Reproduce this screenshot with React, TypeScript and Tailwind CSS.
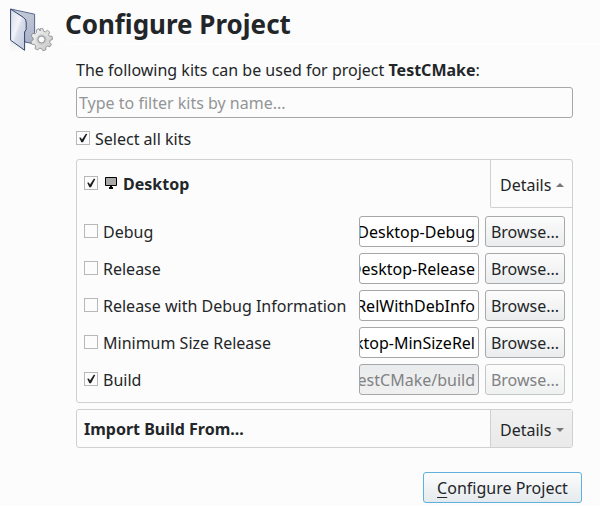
import React from "react";

function Check({ checked = false, className = "mb-px" }: { checked?: boolean; className?: string }) {
  return (
    <span className={`block h-[14px] w-[14px] shrink-0 border border-[#b8b8b8] bg-[#fcfcfc] ${className}`}>
      {checked && (
        <svg viewBox="0 0 12 12" className="block h-3 w-3">
          <path d="M2.2 5.7 3.8 5.4 5 7.5 8.8 1.7 10.3 2.1 6 10.2 4.4 10.2Z" fill="#1b1e20" />
        </svg>
      )}
    </span>
  );
}

function Heading() {
  return (
    <header className="flex h-[45px]">
      <svg viewBox="0 0 50 50" className="ml-[5px] mt-1 h-[50px] w-[50px] shrink-0">
        <defs>
          <linearGradient id="back" x1="0" y1="0" x2="0" y2="1">
            <stop offset="0" stopColor="#c3cad8" />
            <stop offset="1" stopColor="#a9b2c8" />
          </linearGradient>
          <linearGradient id="front" x1="0" y1="0" x2="1" y2="1">
            <stop offset="0" stopColor="#d7dce9" />
            <stop offset=".42" stopColor="#f1f3f8" />
            <stop offset=".52" stopColor="#d9deea" />
            <stop offset="1" stopColor="#bcc5da" />
          </linearGradient>
          <linearGradient id="metal" x1="0" y1="0" x2="1" y2="1">
            <stop offset="0" stopColor="#f8f8f8" />
            <stop offset="1" stopColor="#c4c4c4" />
          </linearGradient>
          <linearGradient id="reflection" x1="0" y1="0" x2="0" y2="1">
            <stop offset="0" stopColor="#d9dde5" />
            <stop offset="1" stopColor="#fcfcfc" />
          </linearGradient>
        </defs>
        <path d="M5 36 19 46 19 48 5 48Z" fill="url(#reflection)" opacity=".6" />
        <path d="M5.7 5 29.6 10.2 29.6 40 20 38Z" fill="url(#back)" stroke="#4a5a80" strokeWidth=".9" />
        <path d="M5.6 5.1 18.5 13.5Q21.6 15.5 21.2 19V25.5L19.6 28V46.3L5.6 36.2Z" fill="url(#front)" stroke="#33456e" strokeWidth="1" />
        <g transform="translate(36.5 35.5)" fill="url(#metal)" stroke="#858585" strokeWidth=".8">
          <path fillRule="evenodd" d="M-1.5-10.8H1.5L2-8.3 3.8-7.6 6-9.2 8.3-7.3 7-4.9 7.9-3.4 10.6-3.1 11-.1 8.5.9 8.2 2.8 9.9 4.8 8.4 7.3 5.8 6.6 4.3 7.8 4.3 10.3 1.4 11.2 0 9-2 8.7-3.8 10.5-6.5 9.1-5.9 6.4-7.1 5-9.8 4.7-10.6 1.8-8.4.4-8.3-1.5-10.2-3.4-9-6.1-6.3-5.7-5-7.1-5.2-9.6-2.5-10.8-1.3-8.5ZM0-3.5A3.5 3.5 0 1 0 0 3.5 3.5 3.5 0 1 0 0-3.5Z" />
          <circle r="4.6" fill="none" stroke="#bdbdbd" strokeWidth="1" />
          <circle r="3.3" fill="#fcfcfc" stroke="#8b929a" />
        </g>
      </svg>
      <h1 className="ml-[10px] h-[44px] flex-1 border-b border-white pt-[6px] text-[26px] font-bold leading-9">Configure Project</h1>
    </header>
  );
}

const rows = [
  { name: "Debug", path: "Desktop-Debug" },
  { name: "Release", path: "Desktop-Release" },
  { name: "Release with Debug Information", path: "Desktop-RelWithDebInfo" },
  { name: "Minimum Size Release", path: "Desktop-MinSizeRel" },
  { name: "Build", path: "TestCMake/build", checked: true },
];

function BuildRow({ name, path, checked }: { name: string; path: string; checked?: boolean }) {
  return (
    <div className="flex h-[31px] items-center">
      <Check checked={checked} />
      <span className="ml-[5px] flex-1 whitespace-nowrap pt-px">{name}</span>
      <div
        className={`flex h-[31px] w-[120px] items-center justify-end overflow-hidden whitespace-nowrap rounded-[3px] border border-[#a6a7a8] pr-[3px] pt-px ${
          checked ? "bg-linear-to-b from-[#eaebec] to-[#f0f0f1] text-[#808284]" : "bg-white text-black"
        }`}
      >
        {path}
      </div>
      <button
        className={`ml-[6px] h-[31px] w-[80px] rounded-[3px] border bg-linear-to-b pt-px ${
          checked ? "border-[#c5c6c6] from-[#fcfcfc] to-[#eff0f0] text-[#808284]" : "border-[#a8a9aa] from-[#fcfcfc] to-[#ebeced]"
        }`}
      >
        Browse...
      </button>
    </div>
  );
}

export default function App() {
  return (
    <main className="h-[506px] w-[600px] overflow-hidden bg-[#fcfcfc] font-['Noto_Sans',sans-serif] text-[16px] leading-[22px] text-[#232629]">
      <Heading />
      <div className="ml-[76px] w-[497px]">
        <p className="h-[42px] whitespace-nowrap pt-[14px]">
          The following kits can be used for project <b>TestCMake</b>:
        </p>
        <div className="flex h-[31px] items-center rounded-[3px] border border-[#a6a7a8] pl-[2px] pt-px text-[#939597]">
          Type to filter kits by name...
        </div>
        <div className="mt-[10px] flex h-[22px] items-center">
          <Check checked className="mb-[2px]" />
          <span className="ml-[5px]">Select all kits</span>
        </div>
        <section className="mt-[9px] h-[244px] rounded-[3px] border border-[#cfd0d1]">
          <div className="flex h-[48px]">
            <div className="flex flex-1 items-center pl-[7px]">
              <Check checked className="mb-[2px]" />
              <svg viewBox="0 0 12 12" className="mb-[2px] ml-[7px] h-[12px] w-[12px]">
                <path d="M.5.5H11.5V8.5H.5Z" fill="#aaa" stroke="#000" />
                <path d="M5 9H7V10H8V12H4V10H5Z" fill="#000" />
              </svg>
              <b className="ml-[6px]">Desktop</b>
            </div>
            <div className="flex w-[82px] items-center rounded-bl-[2px] border-b border-l border-[#cfd0d1] pl-[9px] pt-[3px]">
              Details
              <svg viewBox="0 0 8 4" className="mb-px ml-[5px] h-1 w-2"><path d="M0 4 4 0 8 4Z" fill="#777" /></svg>
            </div>
          </div>
          <div className="flex flex-col gap-[6px] pl-[7px] pr-[7px] pt-[8px]">
            {rows.map((row) => <BuildRow key={row.name} {...row} />)}
          </div>
        </section>
        <section className="mt-[6px] flex h-[39px] rounded-[3px] border border-[#cfd0d1]">
          <b className="flex flex-1 items-center pl-[7px] pt-px">Import Build From...</b>
          <div className="flex w-[82px] items-center border-l border-[#cfd0d1] bg-linear-to-b from-[#f0f0f0] to-[#eaeaea] pl-[9px] pt-[3px]">
            Details
            <svg viewBox="0 0 8 4" className="mb-px ml-[5px] h-1 w-2"><path d="M0 0H8L4 4Z" fill="#777" /></svg>
          </div>
        </section>
      </div>
      <div className="mt-6 flex justify-end pr-[18px]">
        <button className="h-[31px] w-[159px] rounded-[3px] border border-[#5fb0dd] bg-linear-to-b from-[#fcfcfc] to-[#e5eaee] pt-px">
          <span className="underline underline-offset-[3px]">C</span>onfigure Project
        </button>
      </div>
    </main>
  );
}
